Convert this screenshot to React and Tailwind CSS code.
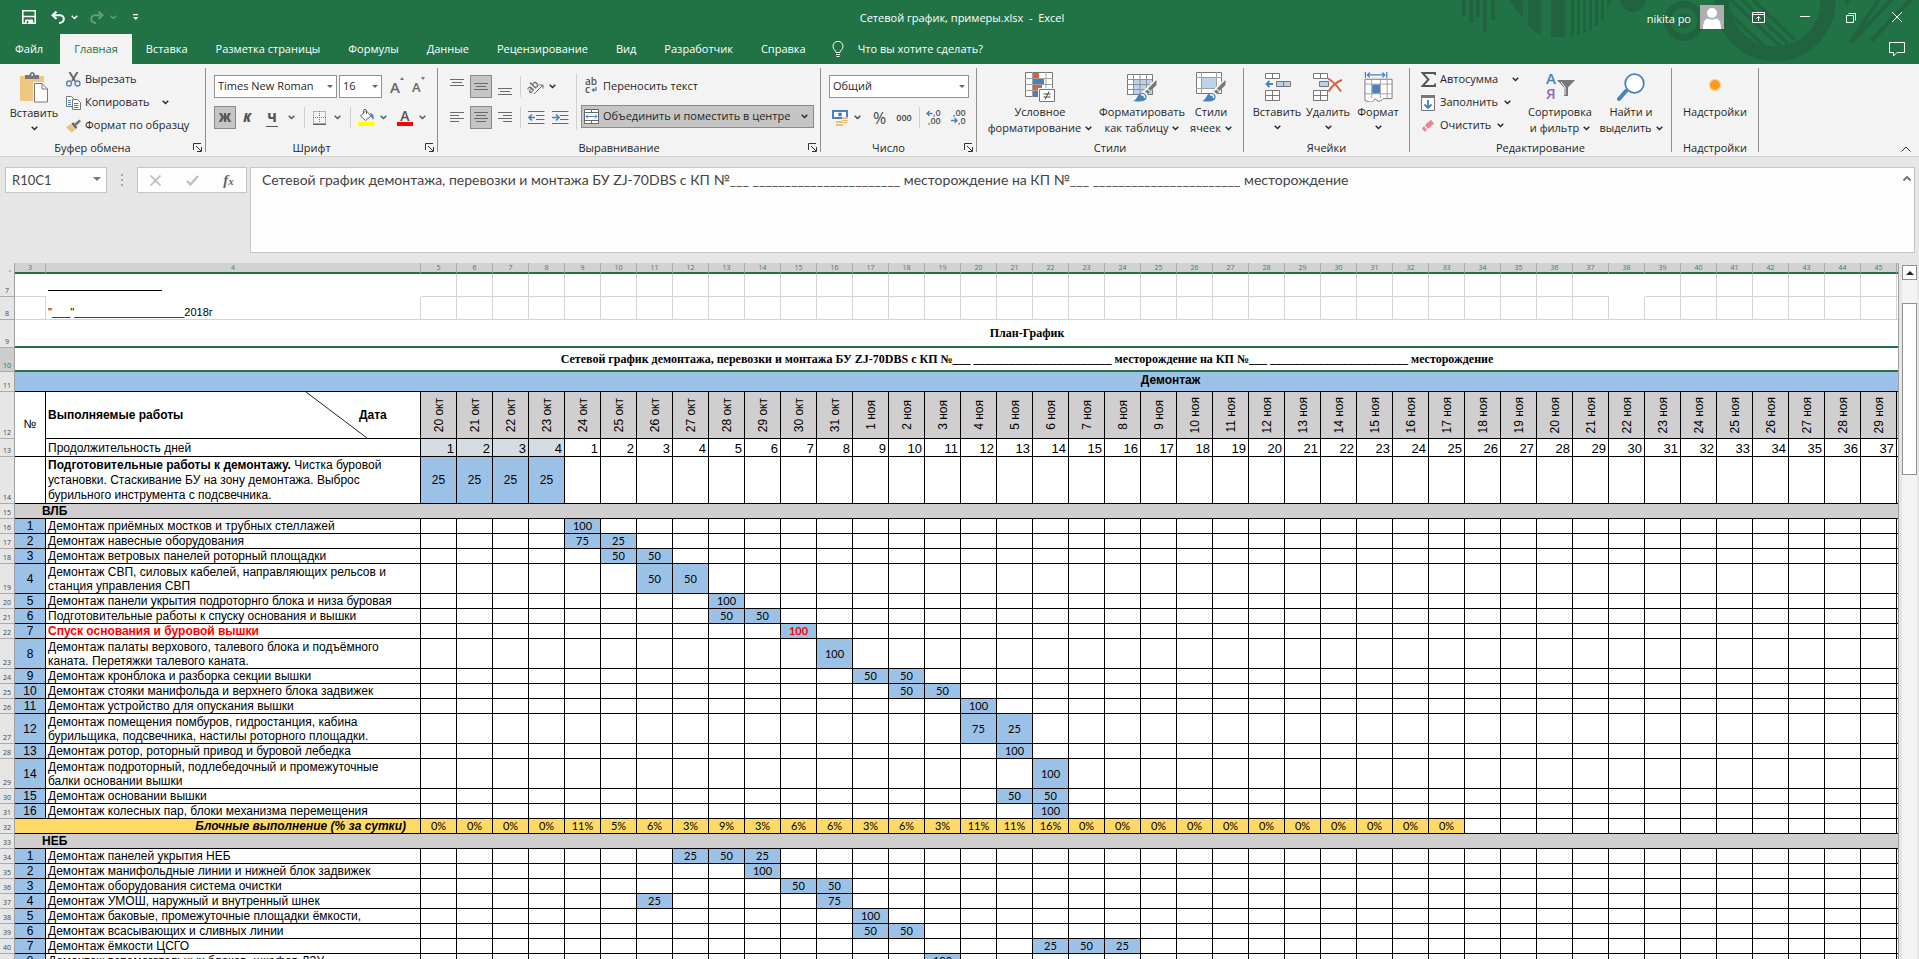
import React, { useState } from 'react';

const days = [
  ...Array.from({ length: 12 }, (_, i) => `${20 + i} окт`),
  ...Array.from({ length: 29 }, (_, i) => `${i + 1} ноя`),
];
const durations = [1, 2, 3, 4, ...Array.from({ length: 37 }, (_, i) => i + 1)];

const blockVLB = [
  { row: 16, n: 1, text: 'Демонтаж приёмных мостков и трубных стеллажей', v: { 4: 100 } },
  { row: 17, n: 2, text: 'Демонтаж навесные оборудования', v: { 4: 75, 5: 25 } },
  { row: 18, n: 3, text: 'Демонтаж ветровых панелей роторный площадки', v: { 5: 50, 6: 50 } },
  { row: 19, n: 4, text: 'Демонтаж СВП, силовых кабелей, направляющих рельсов и станция управления СВП', v: { 6: 50, 7: 50 }, tall: true },
  { row: 20, n: 5, text: 'Демонтаж панели укрытия подроторнго блока и низа буровая', v: { 8: 100 } },
  { row: 21, n: 6, text: 'Подготовительные работы к спуску основания и вышки', v: { 8: 50, 9: 50 } },
  { row: 22, n: 7, text: 'Спуск основания и буровой вышки', v: { 10: 100 }, red: true },
  { row: 23, n: 8, text: 'Демонтаж палаты верхового, талевого блока и подъёмного каната. Перетяжки талевого каната.', v: { 11: 100 }, tall: true },
  { row: 24, n: 9, text: 'Демонтаж кронблока и разборка секции вышки', v: { 12: 50, 13: 50 } },
  { row: 25, n: 10, text: 'Демонтаж стояки манифольда и верхнего блока задвижек', v: { 13: 50, 14: 50 } },
  { row: 26, n: 11, text: 'Демонтаж устройство для опускания вышки', v: { 15: 100 } },
  { row: 27, n: 12, text: 'Демонтаж помещения помбуров, гидростанция, кабина бурильщика, подсвечника, настилы роторного площадки.', v: { 15: 75, 16: 25 }, tall: true },
  { row: 28, n: 13, text: 'Демонтаж ротор, роторный привод и буровой лебедка', v: { 16: 100 } },
  { row: 29, n: 14, text: 'Демонтаж подроторный, подлебедочный и промежуточные балки основании вышки', v: { 17: 100 }, tall: true },
  { row: 30, n: 15, text: 'Демонтаж основании вышки', v: { 16: 50, 17: 50 } },
  { row: 31, n: 16, text: 'Демонтаж колесных пар, блоки механизма перемещения', v: { 17: 100 } },
];

const blockNEB = [
  { row: 34, n: 1, text: 'Демонтаж панелей укрытия НЕБ', v: { 7: 25, 8: 50, 9: 25 } },
  { row: 35, n: 2, text: 'Демонтаж манифольдные линии и нижней блок задвижек', v: { 9: 100 } },
  { row: 36, n: 3, text: 'Демонтаж оборудования система очистки', v: { 10: 50, 11: 50 } },
  { row: 37, n: 4, text: 'Демонтаж УМОШ, наружный и внутренный шнек', v: { 6: 25, 11: 75 } },
  { row: 38, n: 5, text: 'Демонтаж баковые, промежуточные площадки ёмкости,', v: { 12: 100 } },
  { row: 39, n: 6, text: 'Демонтаж всасывающих и сливных линии', v: { 12: 50, 13: 50 } },
  { row: 40, n: 7, text: 'Демонтаж ёмкости ЦСГО', v: { 17: 25, 18: 50, 19: 25 } },
  { row: 41, n: 8, text: 'Демонтаж вспомогательных блоков, шкафов ЛЗУ', v: { 14: 100 } },
];

const percents = [0, 0, 0, 0, 11, 5, 6, 3, 9, 3, 6, 6, 3, 6, 3, 11, 11, 16, 0, 0, 0, 0, 0, 0, 0, 0, 0, 0, 0];

const line = '_'.repeat(23);
const title = `Сетевой график демонтажа, перевозки и монтажа БУ ZJ-70DBS с КП №___ ${line} месторождение на КП №___ ${line} месторождение`;

/* ---------- small parts ---------- */

const Chevron = ({ className = '' }) => (
  <svg viewBox="0 0 7 5" className={`w-[7px] h-[5px] shrink-0 ${className}`} fill="none" stroke="currentColor" strokeWidth="1.4">
    <path d="M.7 .8 3.5 3.6 6.3 .8" />
  </svg>
);

const Launcher = () => (
  <button aria-label="Параметры" className="absolute right-[3px] bottom-0 text-[#333]">
    <svg viewBox="0 0 9 9" className="w-[9px] h-[9px]" fill="none" stroke="currentColor">
      <path d="M.5 7V.5H8M3 3l5 5M8.500 4v4.500H4" />
    </svg>
  </button>
);

const Group = ({ label, className, launcher, children }) => (
  <section className={`relative shrink-0 h-[84px] border-r border-[#8f8f8f] flex flex-col ${className}`}>
    <div className="h-[72px] shrink-0 flex">{children}</div>
    <p className={`shrink-0 text-center leading-4 ${launcher ? 'pr-5' : ''}`}>{label}</p>
    {launcher && <Launcher />}
  </section>
);

const Sep = ({ className = '' }) => <span className={`w-px h-[21px] bg-[#d0d0d0] shrink-0 ${className}`} />;

const Combo = ({ label, value, className }) => (
  <div className={`relative h-[23px] shrink-0 ${className}`}>
    <select aria-label={label} className="appearance-none w-full h-full bg-white border border-[#919191] pl-[3px] text-[#262626]">
      <option>{value}</option>
    </select>
    <span className="absolute right-1 top-[10px] border-x-3 border-t-3 border-x-transparent border-t-[#666] pointer-events-none" />
  </div>
);

const BigButton = ({ icon, lines, below, className }) => (
  <button className={`shrink-0 flex flex-col items-center pt-1 ${className}`}>
    {icon}
    <span className="block mt-[2px] leading-4 whitespace-nowrap">{lines[0]}</span>
    {lines[1] && (
      <span className="flex items-center gap-1 leading-4 whitespace-nowrap">
        {lines[1]}
        <Chevron />
      </span>
    )}
    {below && <Chevron className="mt-[5px]" />}
  </button>
);

const SmallButton = ({ icon, text, chevron, gap = 'gap-1' }) => (
  <button className={`h-[23px] flex items-center whitespace-nowrap ${gap}`}>
    <span className="flex items-center gap-1">
      {icon}
      {text}
    </span>
    {chevron && <Chevron />}
  </button>
);

const Lines = ({ rows }) => (
  <svg viewBox="0 0 14 18" className="w-[14px] h-[18px]" stroke="#6a6a6a">
    {rows.map(([x1, x2, y]) => (
      <path key={y} d={`M${x1} ${y}.5H${x2}`} />
    ))}
  </svg>
);

/* ---------- icons ---------- */

const PasteIcon = () => (
  <svg viewBox="0 0 28 31" className="w-[30px] h-[31px]">
    <path d="M0 4h24v25H0z" fill="#edc87e" />
    <path d="M5 7V3h4.500c0-4 5.500-4 5.500 0h4v4z" fill="#777" />
    <circle cx="12.200" cy="2.800" r="1" fill="#f3f3f3" />
    <path d="M13 10h10l5 5v16H13z" fill="#f3f3f3" />
    <path d="M14.500 11.500h7.500l5.500 5.500v13h-13z" fill="#fff" stroke="#777" />
    <path d="M22 11.500V17h5.500" fill="none" stroke="#777" />
  </svg>
);

const ScissorsIcon = () => (
  <svg viewBox="0 0 15 15" className="w-[15px] h-[15px]" fill="none">
    <path d="M3.500 0 9 9M11.500 0 6 9" stroke="#666" strokeWidth="1.900" />
    <circle cx="3" cy="11.500" r="2.500" stroke="#4a80bb" strokeWidth="1.300" />
    <circle cx="11.500" cy="11.500" r="2.500" stroke="#4a80bb" strokeWidth="1.300" />
  </svg>
);

const CopyIcon = () => (
  <svg viewBox="0 0 15 14" className="w-[15px] h-[14px]">
    <path d="M.5.5h5l2 2v8h-7z" fill="#fff" stroke="#777" />
    <path d="M2 4.500h3M2 6.500h3M2 8.500h3" stroke="#4a80bb" />
    <path d="M6.500 3.500h5l3 3v7h-8z" fill="#fff" stroke="#777" />
    <path d="M8 7.500h4.500M8 9.500h4.500M8 11.500h4.500" stroke="#4a80bb" />
  </svg>
);

const BrushIcon = () => (
  <svg viewBox="0 0 16 14" className="w-[15px] h-[14px]">
    <path d="M0 8l5-3 5 6-4 3z" fill="#edc07a" />
    <path d="M5.500 4.500 8 3l4 5-1.500 2.500z" fill="#666" />
    <path d="M9 4.500 14 0l2 2-4.500 4.500z" fill="#777" />
  </svg>
);

const BucketIcon = () => (
  <svg viewBox="0 0 17 17" className="w-[17px] h-[17px]">
    <path d="M2.500 7 8 1.500l5 5.500-5.500 4.500z" fill="#fff" stroke="#666" />
    <path d="M5.500 5V1.500c0-1.500 3-1.500 3 0V5" fill="none" stroke="#666" />
    <path d="M12 4c3 .5 4.500 3 3.500 6.500-1.500-1-2.500-2.500-2.500-4z" fill="#4a80bb" />
    <path d="M0 13h16.500v4H0z" fill="#ff0" />
  </svg>
);

const BorderIcon = () => (
  <svg viewBox="0 0 13 14" className="w-[13px] h-[14px]" fill="none" stroke="#777">
    <path d="M.5.5h12v12M.5.5v12M6.500 0v12M0 6.500h13" strokeDasharray="1 1" />
    <path d="M0 13.200h13" stroke="#444" strokeWidth="1.300" />
  </svg>
);

const CondIcon = () => (
  <svg viewBox="0 0 30 30" className="w-[30px] h-[30px]">
    <path d="M.5.5h27v24H.5z" fill="#fff" stroke="#777" />
    <path d="M7.500 0v25M21 0v25M0 6.500h28M0 12.500h28M0 18.500h28" stroke="#a0a0a0" />
    <path d="M8 1h6v5H8z" fill="#db5f3e" />
    <path d="M8 7h11v5H8z" fill="#4a80bb" />
    <path d="M8 13h9v5H8z" fill="#db5f3e" />
    <path d="M8 19h5v5H8z" fill="#4a80bb" />
    <path d="M13 16h17v14H13z" fill="#f3f3f3" />
    <path d="M14.500 17.500h15v12h-15z" fill="#fff" stroke="#777" />
    <path d="M18.500 22h7M18.500 25h7M24 19.500l-4 8" stroke="#444" fill="none" />
  </svg>
);

const TableBrush = ({ cells }) => (
  <svg viewBox="0 0 30 30" className="w-[30px] h-[30px]">
    {cells ? (
      <>
        <path d="M.5.5h25v21H.5z" fill="#fff" stroke="#777" />
        <path d="M5.500 0v22M20.500 0v22M0 5.500h26M0 16.500h26" stroke="#a0a0a0" />
        <path d="M6 6h14v10H6z" fill="#bcd2ea" />
      </>
    ) : (
      <>
        <path d="M.5 2.500h25v20H.5z" fill="#fff" stroke="#777" />
        <path d="M7 8h18v14H7z" fill="#bcd2ea" />
        <path d="M6.500 2v20M13 2v20M19.500 2v20M0 7.500h25M0 12.500h25M0 17.500h25" stroke="#909090" />
      </>
    )}
    <path d="M29.500 6v7L19 24l-4-4z" fill="#f3f3f3" />
    <path d="M29.500 8v5l-6 6-2.500-2.500zM20.500 17.500l2.500 2.500-2 2-3-2.500z" fill="#777" />
    <path d="M6 29c4-.5 4-7 9-8 3 0 5 2 4.500 5-1 4-8 4-13.500 3z" fill="#4a80bb" />
    <path d="M14 23c2-1 4 .5 3.500 3" stroke="#fff" fill="none" strokeWidth="1.500" />
  </svg>
);

const InsertIcon = () => (
  <svg viewBox="0 0 27 28" className="w-[27px] h-[30px]" fill="#fff" stroke="#777">
    <path d="M1.500.5h14v5h-14zM8.500.5v5M1.500 17.500h14v10h-14zM8.500 17.500v10M1.500 22.500h14" />
    <path d="M12.500 8.500h14v5h-14zM19.500 8.500v5" fill="#bcd2ea" />
    <path d="M9 11H3M5.500 8 2.500 11l3 3" fill="none" stroke="#4a80bb" strokeWidth="1.800" />
  </svg>
);

const DeleteIcon = () => (
  <svg viewBox="0 0 30 28" className="w-[30px] h-[30px]" fill="#fff" stroke="#777">
    <path d="M.5.5h14v5H.5zM7.500.5v5M.5 17.500h14v10H.5zM7.500 17.500v10M.5 22.500h14" />
    <path d="M6.500 8.500h9v5h-9z" fill="#bcd2ea" />
    <path d="M15 5.500c5 3 9 7 13 13M29 7c-6 2-10 6-13.500 11.500" fill="none" stroke="#db5f3e" strokeWidth="2" />
  </svg>
);

const FormatIcon = () => (
  <svg viewBox="0 0 29 31" className="w-[29px] h-[30px]">
    <path d="M1 0v6M23 0v6M3 3h18M5.500.5 3 3l2.500 2.500M18.500.5 21 3l-2.500 2.500" fill="none" stroke="#4a80bb" strokeWidth="1.300" />
    <path d="M.5 7.500h28v20H19c-2 4-6 3-8 0-2 4-5 4-7 3l-3.500-1z" fill="#fff" stroke="#777" />
    <path d="M7.500 7v20M16.500 7v20M23.500 7v20M0 12.500h28M0 22.500h28" stroke="#a0a0a0" />
    <path d="M8 13h8v9H8z" fill="#4a80bb" />
  </svg>
);

const SortIcon = () => (
  <svg viewBox="0 0 30 30" className="w-[30px] h-[30px] overflow-visible">
    <text x="1" y="12" fontFamily="Open Sans, sans-serif" fontWeight="600" fontSize="15" fill="#4a80bb">А</text>
    <text x="1" y="27" fontFamily="Open Sans, sans-serif" fontWeight="600" fontSize="15" fill="#9467b5">Я</text>
    <path d="M12 8h18l-7 7.500V24h-4v-8.500z" fill="#777" />
    <path d="M20 23v-8l-4-5" stroke="#fff" fill="none" />
  </svg>
);

const FindIcon = () => (
  <svg viewBox="0 0 28 28" className="w-[28px] h-[30px]">
    <path d="M9 18 2 26" stroke="#4a80bb" strokeWidth="4" strokeLinecap="round" />
    <circle cx="17.500" cy="10.500" r="9.300" fill="#fff" stroke="#4a80bb" strokeWidth="1.800" />
  </svg>
);

const DotIcon = () => (
  <svg viewBox="0 0 30 30" className="w-[30px] h-[30px]">
    <circle cx="15" cy="13" r="6.200" fill="#fbd5a0" />
    <circle cx="15" cy="13" r="5" fill="#ff9a1f" />
  </svg>
);

const SigmaIcon = () => (
  <svg viewBox="0 0 15 15" className="w-[15px] h-[15px]" fill="none" stroke="#555" strokeWidth="1.900">
    <path d="M14 3V1H1.500l6 6.500-6 6.500H14v-2.500" />
  </svg>
);

const FillIcon = () => (
  <svg viewBox="0 0 15 16" className="w-[15px] h-[16px]">
    <path d="M.5.5h13v15H.5z" fill="#fff" stroke="#777" />
    <path d="M0 0h14v3H0z" fill="#777" />
    <path d="M7 5v8M3.500 9.500 7 13l3.500-3.500" fill="none" stroke="#4a80bb" strokeWidth="1.800" />
  </svg>
);

const EraserIcon = () => (
  <svg viewBox="0 0 15 14" className="w-[15px] h-[14px]">
    <path d="M4 6 10 .8l3 3.700L7 10z" fill="#e8879b" />
    <path d="M3 7l3 4-2 1.800L.8 9.500z" fill="#e8879b" />
  </svg>
);

const IndentIcon = ({ right }) => (
  <svg viewBox="0 0 17 14" className="w-[17px] h-[14px]" fill="none">
    <path d="M0 .5h16.500M8 4.500h8.500M8 8.500h8.500M0 12.500h16.500" stroke="#6a6a6a" />
    <path d={right ? 'M0 6.500h6M4 3.500l3 3-3 3' : 'M7 6.500H1.500M4 3.500l-3 3 3 3'} stroke="#4a80bb" strokeWidth="1.700" />
  </svg>
);

const MoneyIcon = () => (
  <svg viewBox="0 0 17 16" className="w-[17px] h-[16px]">
    <path d="M0 0h16v9H0z" fill="#4a80bb" />
    <path d="M2 2h12v5H2z" fill="#fff" />
    <circle cx="8" cy="4.500" r="2" fill="#4a80bb" />
    <path d="M10 7h6v6h-6zM4 11h7v5H4z" fill="#edc07a" />
    <path d="M10 9.500h6M10 11.500h6M4 13.500h7" stroke="#f3f3f3" />
  </svg>
);

const DigitIcon = ({ more }) => (
  <svg viewBox="0 0 16 15" className="w-[16px] h-[15px] overflow-visible" fontFamily="Open Sans, sans-serif" fontSize="9" fontWeight="600" fill="#555">
    <text x={more ? 7 : 2} y="6">{more ? ',0' : ',00'}</text>
    <text x={more ? 2 : 7} y="14">{more ? ',00' : ',0'}</text>
    <path
      d={more ? 'M6.500 3.500H1M3.500 1 1 3.500 3.500 6' : 'M0 10.500h6M3.500 8 6 10.500 3.500 13'}
      fill="none"
      stroke="#4a80bb"
      strokeWidth="1.400"
    />
  </svg>
);

/* ---------- header ---------- */

const HeaderArt = () => (
  <svg viewBox="0 0 519 64" className="absolute right-0 top-0 w-[519px] h-16" fill="#22633f" stroke="none">
    <path d="M62 0h4v16h-4zM69 0h4v23h-4zM76 0h4v17h-4zM83 0h4v32h-4zM91 0h4v20h-4z" />
    <path d="M110 0h13v17c-6-5-10-10-13-17zM128 0h13v35c-5-2-9-5-13-10zM151 0h14v37h-14zM171 0h3v36h-3zM177 0h3v35h-3zM183 0h3v33h-3zM189 0h3v31h-3zM195 0h3v26h-3zM201 0h3v20h-3zM207 0h4l-4 10z" />
    <circle cx="233" cy="-1" r="13" />
    <g fill="none" stroke="#22633f">
      <circle cx="284" cy="21" r="16.500" strokeWidth="7" />
      <circle cx="284" cy="21" r="5" strokeWidth="5" />
      <circle cx="375" cy="1" r="53" strokeWidth="15" />
      <path d="M320 4l48 46M331 0l50 47M342 0l46 44M353 0l42 40" strokeWidth="3.500" />
      <path d="M485-10 450 43M500-10l-48 52M515-5l-44 46M460-12l-14 16" strokeWidth="4" />
    </g>
  </svg>
);

const TitleBar = () => (
  <div className="relative h-[34px] flex items-start text-white">
    <div className="flex-1 flex items-center h-[34px] pl-[22px]">
      <button aria-label="Сохранить">
        <svg viewBox="0 0 14 14" className="w-[14px] h-[14px]" fill="none" stroke="#fff">
          <path d="M.8.8h12.400v12.400H.8zM.8 6.500h12.400" strokeWidth="1.600" />
          <path d="M3.500 13.500V10h7v3.500z" fill="#fff" />
          <path d="M5.500 11v2.500" stroke="#217346" strokeWidth="1.500" />
        </svg>
      </button>
      <button aria-label="Отменить" className="ml-[15px] flex items-center gap-[6px]">
        <svg viewBox="0 0 14 13" className="w-[14px] h-[13px]" fill="none" stroke="#fff" strokeWidth="2">
          <path d="M5.500 0.500 1.500 4.200l4 3.800M1.500 4.200H9c5 0 5.500 7.500-1 7.800" />
        </svg>
        <Chevron />
      </button>
      <button aria-label="Вернуть" className="ml-3 flex items-center gap-[6px] opacity-30">
        <svg viewBox="0 0 14 13" className="w-[14px] h-[13px]" fill="none" stroke="#fff" strokeWidth="2">
          <path d="M8.500 0.500l4 3.700-4 3.800M12.500 4.200H5c-5 0-5.500 7.500 1 7.800" />
        </svg>
        <Chevron />
      </button>
      <button aria-label="Настройка панели" className="ml-4">
        <svg viewBox="0 0 6 7" className="w-[6px] h-[7px]" fill="#fff">
          <path d="M0 0h5v1.200H0zM0 3h5.500L2.800 6z" />
        </svg>
      </button>
    </div>
    <h1 className="leading-[36px] whitespace-pre">Сетевой график, примеры.xlsx  -  Excel</h1>
    <div className="flex-1 flex items-center justify-end h-[30px] pt-1 pr-[17px]">
      <span className="leading-5 mt-1">nikita po</span>
      <svg viewBox="0 0 24 24" className="w-6 h-6 ml-[9px] bg-[#b0aeb0]" fill="#fff">
        <circle cx="12" cy="8" r="5" />
        <path d="M3 24c0-7 2-10 5-10.500 2 1.500 6 1.500 8 0 3 .5 5 3.500 5 10.500z" />
      </svg>
      <button aria-label="Параметры ленты" className="ml-7">
        <svg viewBox="0 0 13 11" className="w-[13px] h-[11px]" fill="none" stroke="#fff">
          <path d="M.5.5h12v10H.5zM.5 2.500h12M6.500 9V4.500M4.500 6.500l2-2 2 2" />
        </svg>
      </button>
      <button aria-label="Свернуть" className="ml-[35px]">
        <svg viewBox="0 0 10 11" className="w-[10px] h-[11px]" stroke="#fff"><path d="M0 4.500h10" /></svg>
      </button>
      <button aria-label="Восстановить" className="ml-9">
        <svg viewBox="0 0 10 11" className="w-[10px] h-[11px]" fill="none" stroke="#fff">
          <path d="M.5 3.500h7v7h-7zM2.500 1.500h7v7" />
        </svg>
      </button>
      <button aria-label="Закрыть" className="ml-9">
        <svg viewBox="0 0 10 10" className="w-[10px] h-[10px]" stroke="#fff"><path d="M0 0l10 10M10 0 0 10" /></svg>
      </button>
    </div>
  </div>
);

const tabs = ['Файл', 'Главная', 'Вставка', 'Разметка страницы', 'Формулы', 'Данные', 'Рецензирование', 'Вид', 'Разработчик', 'Справка'];

const Tabs = () => {
  const [active, setActive] = useState('Главная');
  return (
    <nav className="relative h-[30px] flex items-stretch text-white pl-px">
      {tabs.map((tab) => (
        <button
          key={tab}
          onClick={() => setActive(tab)}
          className={`px-[14px] whitespace-nowrap first:mr-[3px] ${active === tab ? 'bg-[#f3f3f3] text-[#217346]' : ''}`}
        >
          {tab}
        </button>
      ))}
      <label className="flex items-center gap-[14px] ml-3">
        <svg viewBox="0 0 12 16" className="w-3 h-4" fill="none" stroke="#fff">
          <path d="M4 11.500c0-2-3-3-3-6.200a5 5 0 0 1 10 0c0 3.200-3 4.200-3 6.200zM4 13.500h4M4.500 15.500h3" />
        </svg>
        <input className="w-40 bg-transparent outline-none placeholder:text-white placeholder:opacity-100" placeholder="Что вы хотите сделать?" />
      </label>
      <button aria-label="Примечания" className="ml-auto mr-[14px]">
        <svg viewBox="0 0 16 15" className="w-4 h-[15px]" fill="none" stroke="#fff">
          <path d="M.5.5h15v10H8L4.500 14v-3.500h-4z" />
        </svg>
      </button>
    </nav>
  );
};

/* ---------- ribbon ---------- */

const activeBtn = 'w-[22px] h-[23px] shrink-0 flex items-center justify-center bg-[#c5c5c5] border border-[#8a8a8a]';

const Ribbon = () => (
  <div className="h-[92px] shrink-0 flex bg-[#f3f3f3] text-[#262626] pt-1 overflow-hidden">
    <Group label="Буфер обмена" className="w-[206px]" launcher>
      <BigButton className="w-16 ml-[2px]" icon={<PasteIcon />} lines={['Вставить']} below />
      <div className="flex flex-col">
        <SmallButton icon={<ScissorsIcon />} text="Вырезать" />
        <SmallButton icon={<CopyIcon />} text="Копировать" chevron gap="gap-3" />
        <SmallButton icon={<BrushIcon />} text="Формат по образцу" />
      </div>
    </Group>

    <Group label="Шрифт" className="w-[232px]" launcher>
      <div className="flex flex-col gap-2 pl-2 pt-[7px]">
        <div className="flex items-center">
          <Combo label="Шрифт" value="Times New Roman" className="w-[123px]" />
          <Combo label="Размер" value="16" className="w-[43px] ml-[2px]" />
          <button className="ml-2 flex items-start text-[15px] font-semibold leading-5 text-[#666]">
            A<span className="border-x-2 border-b-3 border-x-transparent border-b-[#4a80bb]" />
          </button>
          <button className="ml-2 flex items-start text-[13px] font-semibold leading-5 text-[#666]">
            A<span className="border-x-2 border-t-3 border-x-transparent border-t-[#4a80bb]" />
          </button>
        </div>
        <div className="flex items-center text-[12px] text-[#555]">
          <button className={`${activeBtn} font-extrabold`}>Ж</button>
          <button className="w-[22px] font-extrabold italic">К</button>
          <button className="ml-1 w-5 font-extrabold"><span className="border-b border-[#555] px-px">Ч</span></button>
          <Chevron className="ml-[6px]" />
          <Sep className="ml-[9px]" />
          <button className="ml-2" aria-label="Границы"><BorderIcon /></button>
          <Chevron className="ml-2" />
          <Sep className="ml-[9px]" />
          <button className="ml-[7px]" aria-label="Заливка"><BucketIcon /></button>
          <Chevron className="ml-[5px]" />
          <button className="ml-[10px] w-4 border-b-4 border-[#f00] text-[14px] leading-[13px] font-semibold">A</button>
          <Chevron className="ml-[6px]" />
        </div>
      </div>
    </Group>

    <Group label="Выравнивание" className="w-[383px]" launcher>
      <div className="flex flex-col gap-2 pl-[12px] pt-[7px]">
        <div className="flex items-center h-[23px]">
          <button aria-label="По верхнему краю"><Lines rows={[[0, 14, 1], [2, 12, 4], [0, 14, 7]]} /></button>
          <button aria-label="По середине" className={`${activeBtn} ml-[6px]`}><Lines rows={[[0, 14, 5], [2, 12, 8], [0, 14, 11]]} /></button>
          <button aria-label="По нижнему краю" className="ml-[6px]"><Lines rows={[[0, 14, 10], [2, 12, 13], [0, 14, 16]]} /></button>
          <Sep className="ml-2" />
          <button aria-label="Ориентация" className="ml-[7px]">
            <svg viewBox="0 0 17 16" className="w-[17px] h-4 overflow-visible">
              <text x="-2" y="11" transform="rotate(-45 5 8)" fontFamily="Open Sans, sans-serif" fontSize="11" fontWeight="600" fill="#666">ab</text>
              <path d="M6 15 15 6M11.500 6H15v3.500" fill="none" stroke="#666" />
            </svg>
          </button>
          <Chevron className="ml-1" />
        </div>
        <div className="flex items-center h-[23px]">
          <button aria-label="По левому краю"><Lines rows={[[0, 14, 3], [0, 9, 6], [0, 14, 9], [0, 9, 12]]} /></button>
          <button aria-label="По центру" className={`${activeBtn} ml-[6px]`}><Lines rows={[[0, 14, 3], [2, 12, 6], [0, 14, 9], [2, 12, 12]]} /></button>
          <button aria-label="По правому краю" className="ml-[6px]"><Lines rows={[[0, 14, 3], [5, 14, 6], [0, 14, 9], [5, 14, 12]]} /></button>
          <Sep className="ml-2" />
          <button aria-label="Уменьшить отступ" className="ml-[7px]"><IndentIcon /></button>
          <button aria-label="Увеличить отступ" className="ml-[7px]"><IndentIcon right /></button>
        </div>
      </div>
      <div className="ml-auto mr-[6px] pl-1 mt-[6px] h-[56px] border-l border-[#d0d0d0] flex flex-col gap-2">
        <button className="h-[23px] flex items-center gap-[5px] pl-1 pt-px">
          <svg viewBox="0 0 13 16" className="w-[13px] h-4 overflow-visible" fontFamily="Open Sans, sans-serif" fontWeight="600" fontSize="10" fill="#555">
            <text x="0" y="7">ab</text>
            <text x="0" y="15">c</text>
            <path d="M11 9v3H7.500M9 10.500 7.300 12 9 13.500" fill="none" stroke="#4a80bb" strokeWidth="1.300" />
          </svg>
          Переносить текст
        </button>
        <button className="w-[233px] h-[23px] flex items-center gap-1 pl-[2px] bg-[#c5c5c5] border border-[#8a8a8a] whitespace-nowrap">
          <svg viewBox="0 0 15 15" className="w-[15px] h-[15px] shrink-0">
            <path d="M.5.5h14v14H.5z" fill="#fff" stroke="#666" />
            <path d="M0 3.500h15M0 11.500h15M7.500 0v3M7.500 12v3" stroke="#666" />
            <path d="M2 7.500h11M4 5.500l-2 2 2 2M11 5.500l2 2-2 2" fill="none" stroke="#4a80bb" />
          </svg>
          Объединить и поместить в центре
          <Chevron className="ml-auto mr-[5px]" />
        </button>
      </div>
    </Group>

    <Group label="Число" className="w-[156px]" launcher>
      <div className="flex flex-col gap-2 pl-2 pt-[7px]">
        <Combo label="Формат" value="Общий" className="w-[140px]" />
        <div className="flex items-center h-[23px] text-[#444]">
          <button className="ml-[3px]" aria-label="Финансовый формат"><MoneyIcon /></button>
          <Chevron className="ml-[5px]" />
          <button className="ml-[12px] text-[16px] leading-5">%</button>
          <button className="ml-[10px] text-[9px] font-semibold leading-4">000</button>
          <Sep className="ml-[7px]" />
          <button className="ml-[6px]" aria-label="Увеличить разрядность"><DigitIcon more /></button>
          <button className="ml-[9px]" aria-label="Уменьшить разрядность"><DigitIcon /></button>
        </div>
      </div>
    </Group>

    <Group label="Стили" className="w-[267px]">
      <BigButton className="w-[106px] ml-[10px]" icon={<CondIcon />} lines={['Условное', 'форматирование']} />
      <BigButton className="w-[98px]" icon={<TableBrush />} lines={['Форматировать', 'как таблицу']} />
      <BigButton className="w-[40px]" icon={<TableBrush cells />} lines={['Стили', 'ячеек']} />
    </Group>

    <Group label="Ячейки" className="w-[166px]">
      <BigButton className="w-[50px] ml-2" icon={<InsertIcon />} lines={['Вставить']} below />
      <BigButton className="w-[52px]" icon={<DeleteIcon />} lines={['Удалить']} below />
      <BigButton className="w-[48px]" icon={<FormatIcon />} lines={['Формат']} below />
    </Group>

    <Group label="Редактирование" className="w-[262px]">
      <div className="flex flex-col w-[110px] pl-[11px]">
        <SmallButton icon={<SigmaIcon />} text="Автосумма" chevron gap="gap-[14px]" />
        <SmallButton icon={<FillIcon />} text="Заполнить" chevron gap="gap-[6px]" />
        <SmallButton icon={<EraserIcon />} text="Очистить" chevron gap="gap-[6px]" />
      </div>
      <BigButton className="w-[80px]" icon={<SortIcon />} lines={['Сортировка', 'и фильтр']} />
      <BigButton className="w-[62px]" icon={<FindIcon />} lines={['Найти и', 'выделить']} />
    </Group>

    <Group label="Надстройки" className="w-[87px]">
      <BigButton className="w-full" icon={<DotIcon />} lines={['Надстройки']} />
    </Group>

    <button aria-label="Свернуть ленту" className="ml-auto mr-2 self-end mb-1">
      <svg viewBox="0 0 10 6" className="w-[10px] h-[6px]" fill="none" stroke="#333"><path d="M.5 5.500 5 1l4.500 4.500" /></svg>
    </button>
  </div>
);

/* ---------- formula bar ---------- */

const FormulaBar = () => (
  <div className="shrink-0 h-[107px] border-t border-[#d2d2d2] bg-[#e6e6e6] pt-[10px] pl-[5px] pr-1 flex items-start font-['Lato','Open_Sans',sans-serif] text-[#444]">
    <div className="relative">
      <input aria-label="Поле имени" defaultValue="R10C1" className="block w-[102px] h-[26px] bg-[#fdfdfd] border border-[#c6c6c6] pl-[6px] text-[13px]" />
      <span className="absolute right-[6px] top-[10px] border-x-4 border-t-4 border-x-transparent border-t-[#777]" />
    </div>
    <div className="w-[30px] h-[26px] flex flex-col items-center justify-center gap-[3px]">
      <i className="w-[2px] h-[2px] bg-[#a8a8a8]" />
      <i className="w-[2px] h-[2px] bg-[#a8a8a8]" />
      <i className="w-[2px] h-[2px] bg-[#a8a8a8]" />
    </div>
    <div className="w-[110px] h-[26px] bg-[#fdfdfd] border border-[#c6c6c6] flex items-center justify-around">
      <button aria-label="Отмена">
        <svg viewBox="0 0 11 11" className="w-[11px] h-[11px]" stroke="#c0c0c0" strokeWidth="1.800"><path d="M.5.5l10 10M10.500.5l-10 10" /></svg>
      </button>
      <button aria-label="Ввод">
        <svg viewBox="0 0 13 11" className="w-[13px] h-[11px]" fill="none" stroke="#c0c0c0" strokeWidth="2.400"><path d="M1 6l3.500 3.500L12 1" /></svg>
      </button>
      <button className="font-['Liberation_Serif',serif] italic font-bold text-[15px] leading-5 text-[#666]">
        f<span className="text-[11px]">x</span>
      </button>
    </div>
    <div className="relative flex-1 ml-[3px]">
      <textarea
        aria-label="Строка формул"
        defaultValue={title}
        className="block w-full h-[86px] resize-none overflow-hidden bg-[#fdfdfd] border border-[#c6c6c6] pl-[11px] pr-8 pt-[3px] text-[14px] leading-[18px]"
      />
      <svg viewBox="0 0 8 5" className="absolute right-1 top-[9px] w-2 h-[5px]" fill="none" stroke="#777" strokeWidth="2"><path d="M.5 4.500 4 1l3.500 3.500" /></svg>
    </div>
  </div>
);

/* ---------- sheet ---------- */

const RowHead = ({ n, active }) => (
  <th
    scope="row"
    className={`border-r border-b border-r-[#9f9f9f] border-b-[#ababab] align-bottom text-[7px] leading-[10px] font-normal font-['Open_Sans',sans-serif] ${
      active ? 'bg-[#cdcdcd] text-[#217346]' : 'bg-[#e6e6e6] text-[#444]'
    }`}
  >
    {n}
  </th>
);

const cell = 'border-r border-b border-black';
const calibri = "font-['Lato','Open_Sans',sans-serif] text-[11px]";

const TaskRow = ({ row, n, text, v, tall, red }) => (
  <tr className={tall ? 'h-[30px]' : 'h-[15px]'}>
    <RowHead n={row} />
    <td className={`${cell} bg-[#9bc2e6] text-center leading-[14px]`}>{n}</td>
    <td className={`${cell} pl-[2px] leading-[14px] ${tall ? 'pr-5' : 'whitespace-nowrap'} ${red ? 'text-[#f00] font-bold' : ''}`}>{text}</td>
    {days.map((d, i) => (
      <td key={d} className={`${cell} ${calibri} text-center leading-[14px] ${v[i] ? 'bg-[#9bc2e6]' : ''} ${red ? 'text-[#f00] font-bold' : ''}`}>
        {v[i]}
      </td>
    ))}
    <td className="border-b border-black" />
  </tr>
);

const SectionRow = ({ row, text }) => (
  <tr className="h-[15px]">
    <RowHead n={row} />
    <td colSpan={44} className="bg-[#d0cece] border-b border-black pl-[27px] font-bold leading-[14px]">{text}</td>
  </tr>
);

const Sheet = () => (
  <div className="flex-1 min-w-0 overflow-hidden border-r border-[#9f9f9f] bg-white">
    <table className="table-fixed w-full border-separate border-spacing-0 text-[12px] text-black font-['Liberation_Sans',Arial,sans-serif]">
      <colgroup>
        <col className="w-[15px]" />
        <col className="w-[31px]" />
        <col className="w-[375px]" />
        {days.map((d) => (
          <col key={d} className="w-9" />
        ))}
        <col />
      </colgroup>
      <thead>
        <tr className="h-[11px] bg-[#d2d2d2] text-[7px] leading-[8px] text-[#3f7f60] font-['Open_Sans',sans-serif]">
          <th className="bg-[#e6e6e6] border-r border-r-[#9f9f9f]">
            <span className="block w-0 ml-2 mt-1 border-l-3 border-t-3 border-t-transparent border-l-[#b4b4b4] -scale-x-100" />
          </th>
          {Array.from({ length: 43 }, (_, i) => (
            <th key={i} scope="col" className="border-r border-r-[#ababab] border-b-2 border-b-[#217346] font-normal">{i + 3}</th>
          ))}
          <th className="border-b-2 border-b-[#217346]" />
        </tr>
      </thead>
      <tbody>
        <tr className="h-[23px]">
          <RowHead n={7} />
          <td className="border-b border-[#d4d4d4]" />
          <td className="align-bottom pl-[2px] pb-[6px]">
            <span className="block w-[114px] h-3 border-b border-black" />
          </td>
          {days.map((d, i) => (
            <td key={d} className={`border-[#d4d4d4] ${i === 32 || i === 33 ? '' : 'border-r'} ${i === 33 ? '' : 'border-b'}`} />
          ))}
          <td className="border-b border-[#d4d4d4]" />
        </tr>
        <tr className="h-[23px]">
          <RowHead n={8} />
          <td className="border-r border-b border-[#d4d4d4]" />
          <td className="border-r border-b border-[#d4d4d4] align-bottom pl-[2px] text-[11px] leading-[14px] whitespace-nowrap">
            "___"{'_'.repeat(18)}2018г
          </td>
          {days.map((d) => (
            <td key={d} className="border-r border-b border-[#d4d4d4]" />
          ))}
          <td className="border-b border-[#d4d4d4]" />
        </tr>
        <tr className="h-[28px]">
          <RowHead n={9} />
          <td colSpan={44} className="border-b-2 border-[#217346] pl-[141px] text-center font-bold leading-4 font-['Liberation_Serif',serif]">План-График</td>
        </tr>
        <tr className="h-[24px]">
          <RowHead n={10} active />
          <td colSpan={44} className="border-b-2 border-[#217346] pl-[141px] text-center font-bold leading-4 whitespace-nowrap font-['Liberation_Serif',serif]">{title}</td>
        </tr>
        <tr className="h-[20px] bg-[#9bc2e6]">
          <RowHead n={11} />
          <td colSpan={2} className="border-b border-black" />
          <td colSpan={42} className="border-b border-black pl-[22px] text-center align-top font-bold leading-4">Демонтаж</td>
        </tr>
        <tr className="h-[47px]">
          <RowHead n={12} />
          <td rowSpan={2} className={`${cell} text-center`}>№</td>
          <td className={`${cell} pl-[2px] font-bold`}>
            <div className="flex items-center h-[46px]">
              <span className="w-[258px]">Выполняемые работы</span>
              <svg viewBox="0 0 61 46" className="w-[61px] h-[46px]" stroke="#222"><path d="M0 0l61 46" /></svg>
              <span className="-ml-2">Дата</span>
            </div>
          </td>
          {days.map((d) => (
            <th key={d} scope="col" className={`${cell} bg-[#d0cece] font-normal`}>
              <span className="inline-block align-middle leading-4 whitespace-nowrap rotate-180 [writing-mode:vertical-rl]">{d}</span>
            </th>
          ))}
          <td className="border-b border-black bg-[#d0cece]" />
        </tr>
        <tr className="h-[18px]">
          <RowHead n={13} />
          <td className={`${cell} pl-[2px] leading-4`}>Продолжительность дней</td>
          {durations.map((n, i) => (
            <td key={i} className={`${cell} text-right align-bottom pr-[2px] leading-[14px] text-[13px] ${i < 4 ? 'bg-[#d6dce4]' : ''}`}>{n}</td>
          ))}
          <td className="border-b border-black" />
        </tr>
        <tr className="h-[47px]">
          <RowHead n={14} />
          <td className={cell} />
          <td className={`${cell} pl-[2px] pr-5 leading-[15px]`}>
            <b>Подготовительные работы к демонтажу.</b> Чистка буровой установки. Стаскивание БУ на зону демонтажа. Выброс бурильного инструмента с подсвечника.
          </td>
          {days.map((d, i) => (
            <td key={d} className={`${cell} text-center leading-4 ${i < 4 ? 'bg-[#9bc2e6]' : ''}`}>{i < 4 ? 25 : ''}</td>
          ))}
          <td className="border-b border-black" />
        </tr>
        <SectionRow row={15} text="ВЛБ" />
        {blockVLB.map((t) => (
          <TaskRow key={t.row} {...t} />
        ))}
        <tr className="h-[15px]">
          <RowHead n={32} />
          <td colSpan={2} className={`${cell} bg-[#ffd966] text-right pr-[14px] font-bold italic leading-[14px]`}>Блочные выполнение (% за сутки)</td>
          {days.map((d, i) => (
            <td key={d} className={`${cell} ${calibri} text-center leading-[14px] ${i < percents.length ? 'bg-[#ffd966]' : ''}`}>
              {i < percents.length ? `${percents[i]}%` : ''}
            </td>
          ))}
          <td className="border-b border-black" />
        </tr>
        <SectionRow row={33} text="НЕБ" />
        {blockNEB.map((t) => (
          <TaskRow key={t.row} {...t} />
        ))}
      </tbody>
    </table>
  </div>
);

const ScrollBar = () => (
  <div className="w-5 shrink-0 bg-[#e6e6e6] pl-[3px] pr-[2px] pt-[2px]">
    <div className="h-full bg-[#f3f3f3]">
      <button aria-label="Вверх" className="w-full h-[15px] bg-white border border-[#919191] flex items-center justify-center">
        <span className="border-x-4 border-b-4 border-x-transparent border-b-[#222]" />
      </button>
      <div className="mt-[23px] h-[172px] bg-white border border-[#919191]" />
    </div>
  </div>
);

const App = () => {
  return (
    <div className="w-full h-screen overflow-hidden flex flex-col text-[11px] bg-[#e6e6e6] font-['Open_Sans','Noto_Sans',sans-serif]">
      <header className="relative shrink-0 bg-[#217346]">
        <HeaderArt />
        <TitleBar />
        <Tabs />
      </header>
      <Ribbon />
      <FormulaBar />
      <main className="flex-1 min-h-0 flex">
        <Sheet />
        <ScrollBar />
      </main>
    </div>
  );
};

export default App;
